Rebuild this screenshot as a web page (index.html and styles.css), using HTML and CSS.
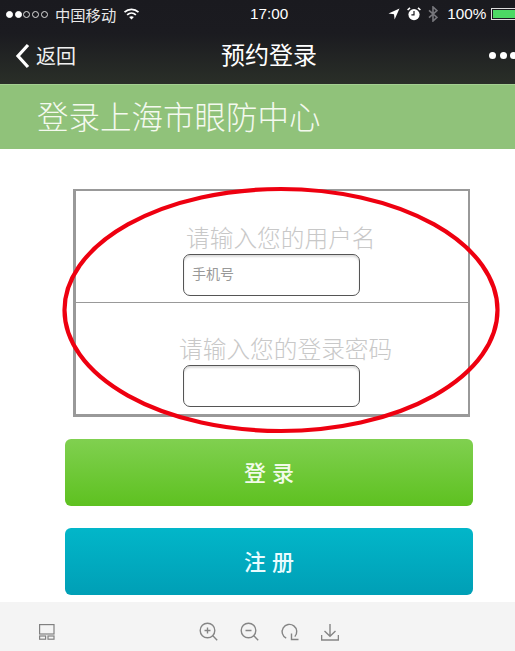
FILE: index.html
```html
<!DOCTYPE html>
<html lang="zh-CN">
<head>
  <meta charset="UTF-8">
  <meta name="viewport" content="width=device-width, initial-scale=1.0">
  <title>预约登录</title>
  <link rel="stylesheet" href="styles.css">
</head>
<body>
  <div class="phone">
    <div class="top-bar">
      <!-- 状态栏 -->
      <div class="status-bar">
        <span class="signal">
          <i class="on"></i><i class="on"></i><i></i><i></i><i></i>
        </span>
        <span class="carrier">中国移动</span>
        <svg class="wifi" width="17" height="12" viewBox="0 0 16 12">
          <path d="M1 4.2C5 .4 11 .4 15 4.2" fill="none" stroke="#fff" stroke-width="1.7"/>
          <path d="M3.6 6.8C6.2 4.4 9.8 4.4 12.4 6.8" fill="none" stroke="#fff" stroke-width="1.7"/>
          <path d="M8 11.6 5.6 9C7 7.9 9 7.9 10.4 9Z" fill="#fff"/>
        </svg>
        <span class="time">17:00</span>
        <svg class="location" width="12" height="12" viewBox="0 0 12 12">
          <path d="M11.5.5 .5 5.6 6 6.2 6.6 11.5Z" fill="#fff"/>
        </svg>
        <svg class="alarm" width="14" height="14" viewBox="0 0 14 14">
          <circle cx="7" cy="7.6" r="5.6" fill="#fff"/>
          <path d="M7 4v3.8H4.4" fill="none" stroke="#1b1b20" stroke-width="1.2"/>
          <path d="M.6 3 3 .8M13.4 3 11 .8" stroke="#fff" stroke-width="1.6"/>
        </svg>
        <svg class="bluetooth" width="10" height="16" viewBox="0 0 10 16">
          <path d="M1 4.4 9 11.4 5 15V1L9 4.6 1 11.6" fill="none" stroke="#77777c" stroke-width="1.6"/>
        </svg>
        <span class="percent">100%</span>
        <span class="battery"><span class="battery-fill"></span></span>
      </div>

      <!-- 导航栏 -->
      <div class="nav-bar">
        <svg class="back-arrow" width="15" height="26" viewBox="0 0 15 26">
          <path d="M13 2 3 13 13 24" fill="none" stroke="#fff" stroke-width="3.2"/>
        </svg>
        <span class="back-text">返回</span>
        <span class="nav-title">预约登录</span>
        <span class="more"><i></i><i></i><i></i></span>
      </div>
    </div>

    <div class="banner">登录上海市眼防中心</div>

    <div class="content">
      <div class="login-box">
        <div class="field field-user">
          <div class="field-label">请输入您的用户名</div>
          <input class="field-input" type="text" placeholder="手机号">
        </div>
        <div class="field field-pass">
          <div class="field-label">请输入您的登录密码</div>
          <input class="field-input" type="password">
        </div>
      </div>
      <button class="btn btn-login">登 录</button>
      <button class="btn btn-register">注 册</button>
    </div>

    <!-- 查看器工具栏 -->
    <div class="toolbar">
      <svg class="tool-layout" width="16" height="16" viewBox="0 0 16 16" fill="none" stroke="#808080" stroke-width="1.2">
        <rect x=".6" y=".6" width="14.4" height="9.4"/>
        <rect x=".6" y="12" width="6" height="3.2"/>
        <rect x="9" y="12" width="6" height="3.2"/>
      </svg>
      <div class="tool-group">
        <svg width="20" height="20" viewBox="0 0 20 20" fill="none" stroke="#858585" stroke-width="1.4">
          <circle cx="8.5" cy="8.5" r="7.3"/>
          <path d="M13.8 13.8l4.4 4.4M5.5 8.5h6M8.5 5.5v6"/>
        </svg>
        <svg width="20" height="20" viewBox="0 0 20 20" fill="none" stroke="#858585" stroke-width="1.4">
          <circle cx="8.5" cy="8.5" r="7.3"/>
          <path d="M13.8 13.8l4.4 4.4M5.5 8.5h6"/>
        </svg>
        <svg width="20" height="20" viewBox="0 0 20 20" fill="none" stroke="#858585" stroke-width="1.4">
          <path d="M6.2 16.2A7.3 7.3 0 1 1 14.8 14.6"/>
          <path d="M11.5 11.5v6h7"/>
        </svg>
        <svg width="18" height="18" viewBox="0 0 18 18" fill="none" stroke="#858585" stroke-width="1.4">
          <path d="M9 1v12M3.5 8 9 13.2 14.5 8M.6 12v5h16.8v-5"/>
        </svg>
      </div>
    </div>

    <svg class="red-circle" width="444" height="254" viewBox="0 0 444 254">
      <ellipse cx="222" cy="127" rx="216.500" ry="121" fill="none" stroke="#ee0010" stroke-width="4.200"/>
    </svg>
  </div>
</body>
</html>
```

FILE: styles.css
```css
* {
  box-sizing: border-box;
}

body {
  margin: 0;
  font-family: "Liberation Sans", "Noto Sans CJK SC", sans-serif;
  background-color: #fff;
}

.phone {
  position: relative;
  width: 515px;
  height: 651px;
  overflow: hidden;
  display: flex;
  flex-direction: column;
}

.top-bar {
  height: 84px;
  background: linear-gradient(#1a1a1f 0, #1b1b20 40%, #2a2f28 100%);
  color: #fff;
}

.status-bar {
  height: 28px;
  display: flex;
  align-items: center;
  font-size: 15.3px;
  padding-left: 6px;
}

.status-bar > * {
  flex: none;
}

.signal {
  display: flex;
  gap: 1.7px;
  width: 46px;
}

.signal i {
  width: 7px;
  height: 7px;
  border: 1px solid #ddd;
  border-radius: 50%;
}

.signal i.on {
  background-color: #fff;
  border-color: #fff;
}

.carrier {
  margin-left: 3px;
  width: 62px;
  white-space: nowrap;
  color: #e8e8e8;
}

.wifi {
  margin-left: 6px;
}

.time {
  margin-left: 110px;
}

.location {
  margin-left: 100px;
}

.alarm {
  margin-left: 7px;
}

.bluetooth {
  margin-left: 7px;
}

.percent {
  margin-left: 9px;
}

.battery {
  margin-left: 5px;
  width: 30px;
  height: 12px;
  border: 1px solid #ddd;
  padding: 1px;
}

.battery-fill {
  display: block;
  height: 100%;
  background-color: #4cd964;
}

.nav-bar {
  height: 56px;
  display: flex;
  align-items: center;
  padding: 0 0 1px 15px;
}

.back-text {
  margin-left: 6px;
  font-size: 20px;
  color: #f0f0f0;
}

.nav-title {
  margin: 0 0 4px 145px;
  font-size: 24px;
}

.more {
  margin-left: auto;
  margin-right: -2px;
  display: flex;
  gap: 3.5px;
}

.more i {
  width: 7px;
  height: 7px;
  border-radius: 50%;
  background-color: #fff;
}

.banner {
  height: 65px;
  padding-left: 37px;
  line-height: 66px;
  font-size: 31.5px;
  font-weight: 300;
  color: #f4f9ef;
  background-color: #90c27a;
  border-top: 1px solid #a5d092;
}

.content {
  flex: 1;
  padding: 40px 0 0 65px;
}

.login-box {
  width: 397px;
  height: 228px;
  margin-left: 8px;
  border: 3px solid #999;
  border-top-width: 2px;
  border-right-width: 2px;
}

.field-user {
  height: 112px;
  padding-top: 33px;
  border-bottom: 1px solid #999;
}

.field-pass {
  padding-top: 32px;
}

.field-label {
  height: 30px;
  line-height: 30px;
  font-size: 23.7px;
  font-weight: 300;
  white-space: nowrap;
  color: #c8c8c8;
}

.field-user .field-label {
  margin-left: 110px;
}

.field-pass .field-label {
  margin-left: 103px;
}

.field-input {
  display: block;
  width: 177px;
  height: 42px;
  margin: 0 0 0 107px;
  padding: 0 8px 2px;
  font-family: inherit;
  font-size: 14px;
  background-color: #fff;
  border: 1.5px solid #555;
  border-radius: 7px;
  box-shadow: inset 0 2px 2px #ddd;
}

.field-input::placeholder {
  color: #999;
}

.btn {
  display: block;
  width: 408px;
  height: 67px;
  padding: 0 0 3px;
  border: none;
  border-radius: 6px;
  font-family: inherit;
  font-size: 22px;
  font-weight: 500;
  color: #f2fbe9;
}

.btn-login {
  margin-top: 22px;
  background: linear-gradient(#80d050, #5ec120);
}

.btn-register {
  margin-top: 22px;
  background: linear-gradient(#02b6c9, #009fb6);
  color: #eafcff;
}

.toolbar {
  height: 49px;
  display: flex;
  align-items: center;
  padding: 11px 0 0 39px;
  background-color: #f4f4f4;
}

.tool-group {
  margin-left: 144px;
  display: flex;
  align-items: center;
  gap: 20.5px;
}

/* 红色圈 */
.red-circle {
  position: absolute;
  left: 59px;
  top: 183px;
}
```
